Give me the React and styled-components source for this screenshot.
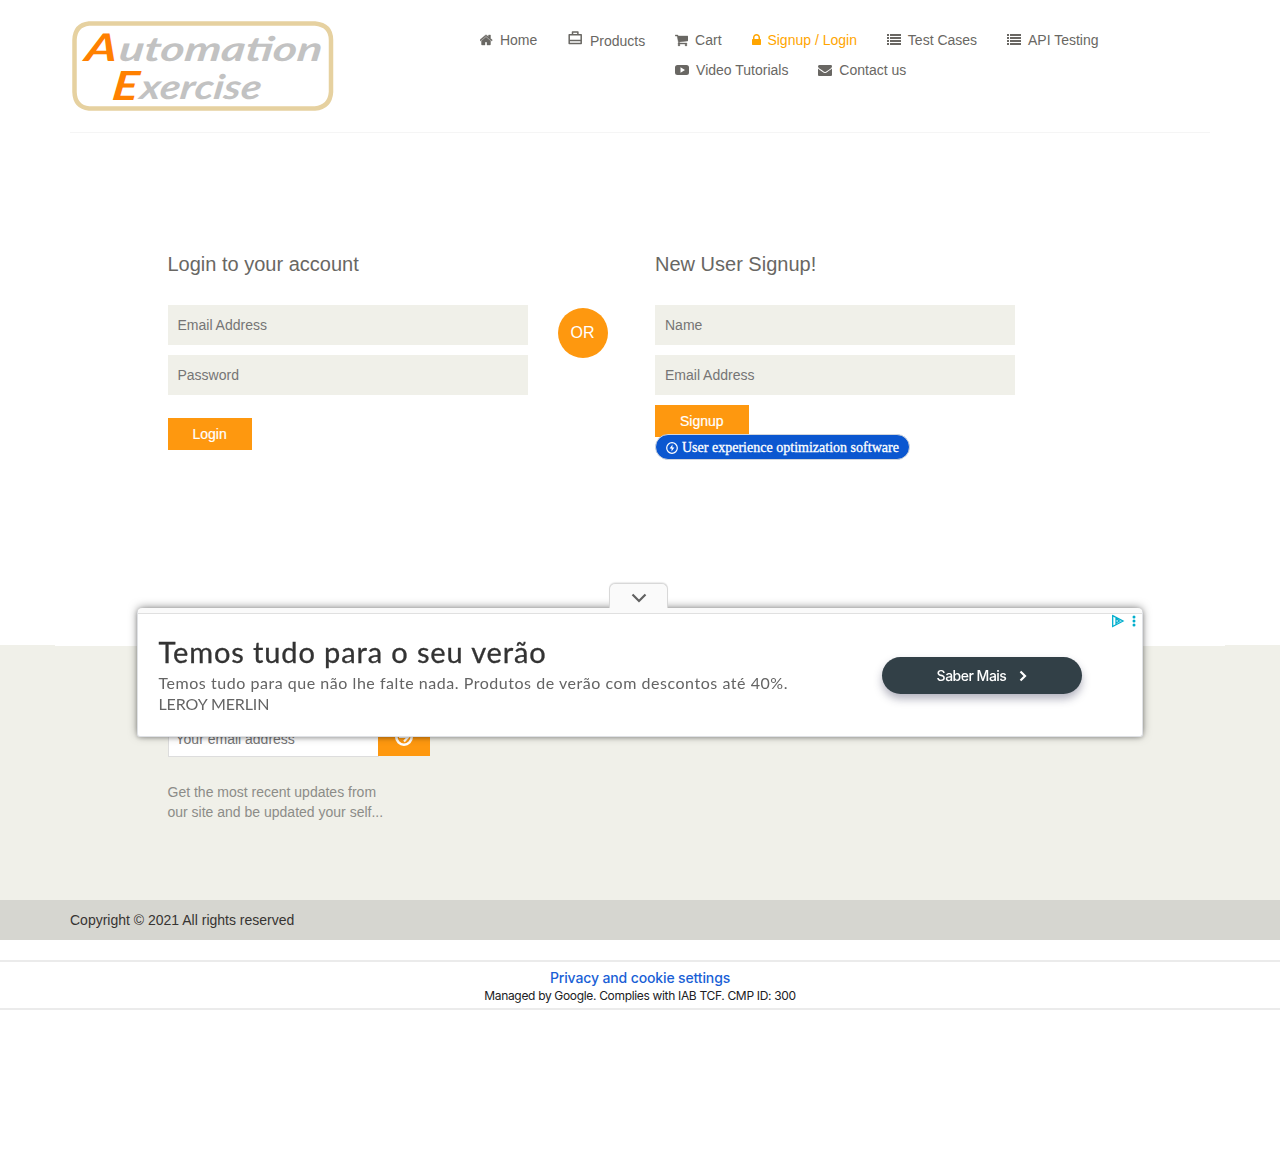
import React from "react";
import styled, { createGlobalStyle } from "styled-components";

const Global = createGlobalStyle`
  * { box-sizing: border-box; }
  body { margin: 0; background: #fff; color: #696763; font-family: "Liberation Sans", Arial, sans-serif; font-size: 14px; line-height: 20px; }
  p, h1, h2 { margin: 0; font-weight: 400; }
`;

const Page = styled.div`
  min-height: 1169px;
  overflow: hidden;
`;

const Header = styled.header`
  display: flex;
  width: 1140px;
  height: 133px;
  margin: 0 auto;
  border-bottom: 1px solid #f5f5f5;
`;

const Logo = styled.a`
  display: block;
  width: 410px;
  padding: 20px 0 0 1px;
`;

const LogoArt = styled.svg`
  display: block;
  overflow: visible;
  text { font-family: Lato, sans-serif; font-style: italic; font-weight: 700; }
`;

const Nav = styled.nav`
  display: flex;
  gap: 30px;
  padding-top: 30px;
`;

const WrapLinks = styled.div`
  display: flex;
  flex-wrap: wrap;
  align-content: flex-start;
  gap: 10px 30px;
  width: 440px;
`;

const NavLink = styled.a`
  display: flex;
  align-items: center;
  gap: 6.9px;
  height: 20px;
  white-space: nowrap;
  color: ${(p) => (p.$active ? "orange" : "#696763")};
  svg { flex: none; fill: currentColor; }
`;

const ProductsLink = styled(NavLink)`
  margin-top: 1px;
  gap: 6.5px;
  svg { margin: -6px 0 0 0.2px; }
`;

const Main = styled.main`
  display: flex;
  width: 1170px;
  height: 512px;
  margin: 0 auto;
  padding: 120px 0 0 112.5px;
`;

const FormColumn = styled.form`
  width: 360px;
`;

const FormTitle = styled.h2`
  height: 52px;
  font-size: 20px;
  line-height: 22px;
`;

const Field = styled.input`
  display: block;
  width: 100%;
  height: 40px;
  margin-bottom: 10px;
  padding: 0 10px;
  border: 0;
  border-radius: 0;
  outline: 0;
  background: #f0f0e9;
  font: 14px "Liberation Sans", Arial, sans-serif;
  &::placeholder { color: #757575; opacity: 1; }
`;

const SubmitButton = styled.button`
  display: block;
  height: 32px;
  margin-top: ${(p) => p.$top || 0}px;
  padding: 0 25px;
  border: 0;
  background: #fe980f;
  color: #fff;
  font: 14px "Liberation Sans", Arial, sans-serif;
  -webkit-text-stroke: 0.2px #fff;
`;

const OrCircle = styled.span`
  width: 50px;
  height: 50px;
  margin: 55px 47.5px 0 30px;
  border-radius: 50%;
  background: #fe980f;
  color: #fff;
  font-size: 16px;
  line-height: 50px;
  text-align: center;
`;

const OptimizerBadge = styled.a`
  position: relative;
  display: flex;
  align-items: center;
  gap: 3px;
  width: 255px;
  height: 26px;
  margin-top: -3px;
  padding: 1px 0 0 9px;
  border: 1px solid #d2d6dc;
  border-radius: 13px;
  background: #0b57d0;
  color: #fff;
  font-family: "Liberation Serif", "Times New Roman", serif;
  font-size: 14px;
  letter-spacing: 0.01px;
  -webkit-text-stroke: 0.3px #fff;
  white-space: nowrap;
`;

const Footer = styled.footer`
  height: 295px;
  background: #f0f0e9;
`;

const FooterInner = styled.div`
  width: 1170px;
  height: 255px;
  margin: 0 auto;
  padding: 76px 0 0 112.5px;
  border-top: 1px solid #fff;
`;

const Newsletter = styled.form`
  display: flex;
  align-items: flex-start;
`;

const NewsInput = styled.input`
  width: 211px;
  height: 35px;
  margin-right: -1px;
  padding: 0 7px 2px;
  border: 1px solid #ddd;
  border-radius: 0;
  background: #fff;
  font: 14px "Liberation Sans", Arial, sans-serif;
  &::placeholder { color: #757575; opacity: 1; }
`;

const NewsButton = styled.button`
  display: flex;
  justify-content: center;
  width: 52px;
  height: 34px;
  padding: 5px 0 0;
  border: 0;
  background: #fe980f;
`;

const NewsText = styled.p`
  margin-top: 25px;
  color: #8c8c88;
`;

const Copyright = styled.div`
  height: 40px;
  padding-left: 70px;
  background: #d6d6d0;
  color: #363432;
  line-height: 40px;
`;

const Consent = styled.section`
  height: 50px;
  margin-top: 20px;
  padding-top: 7px;
  border: solid #ebebeb;
  border-width: 2px 0;
  font-family: Inter, sans-serif;
  text-align: center;
`;

const ConsentLink = styled.a`
  display: block;
  color: #1a5fd6;
  font-size: 14px;
  font-weight: 500;
  line-height: 18px;
  letter-spacing: -0.13px;
`;

const ConsentNote = styled.p`
  color: #202124;
  font-size: 12px;
  line-height: 18px;
  letter-spacing: -0.33px;
`;

const AdDock = styled.aside`
  position: fixed;
  top: 583px;
  left: 137px;
  width: 1006px;
`;

const AdTab = styled.button`
  display: flex;
  justify-content: center;
  align-items: center;
  width: 59px;
  height: 25px;
  margin: 0 0 0 472px;
  padding: 4px 0 0;
  border: 1px solid #d8d8d8;
  border-bottom: 0;
  border-radius: 6px 6px 0 0;
  background: #fafafa;
  position: relative;
  z-index: 1;
  box-shadow: 0 -1px 1px rgba(0, 0, 0, 0.08);
`;

const AdCard = styled.div`
  height: 129px;
  border: 1px solid #dfe1e5;
  border-top: 5px solid #fafafa;
  border-radius: 5px 5px 3px 3px;
  background: #fff;
  box-shadow: 0 -1px 10px -1px rgba(0, 0, 0, 0.5), 0 1px 4px rgba(0, 0, 0, 0.2);
`;

const AdBody = styled.div`
  position: relative;
  display: flex;
  height: 123px;
  padding: 21px 60px 0 20.5px;
  border-top: 1px solid #e0e0e0;
  justify-content: space-between;
`;

const AdCopy = styled.div`
  font-family: Lato, sans-serif;
  white-space: nowrap;
`;

const AdTitle = styled.h1`
  color: #333;
  font-size: 29px;
  line-height: 34px;
  letter-spacing: 0.88px;
  -webkit-text-stroke: 0.3px #333;
`;

const AdText = styled.p`
  margin-top: ${(p) => (p.$brand ? 0 : 3)}px;
  color: #646464;
  font-size: 16px;
  line-height: 21px;
  letter-spacing: ${(p) => (p.$brand ? -0.1 : 0.54)}px;
`;

const AdAction = styled.a`
  display: flex;
  align-items: center;
  justify-content: center;
  gap: 13px;
  width: 200px;
  height: 37px;
  margin-top: 22px;
  border-radius: 19px;
  background: #324047;
  box-shadow: 0 5px 9px rgba(40, 40, 75, 0.35);
  color: #fff;
  font: 500 14px Inter, sans-serif;
  letter-spacing: -0.5px;
`;

const AdChoices = styled.svg`
  position: absolute;
  top: 0;
  right: 4px;
`;

const PATHS = {
  home: ["64 0 1664 1792", 13, "M1408 992v480q0 26-19 45t-45 19h-384v-384h-256v384h-384q-26 0-45-19t-19-45v-480q0-1 .5-3t.5-3l575-474 575 474q1 2 1 6zm223-69l-62 74q-8 9-21 11h-3q-13 0-21-7l-692-577-692 577q-12 8-24 7-13-2-21-11l-62-74q-8-10-7-23.5t11-21.5l719-599q32-26 76-26t76 26l244 204v-195q0-14 9-23t23-9h192q14 0 23 9t9 23v408l219 182q10 8 11 21.5t-7 23.5z"],
  cart: ["64 0 1664 1792", 13, "M704 1536q0 52-38 90t-90 38-90-38-38-90 38-90 90-38 90 38 38 90zm896 0q0 52-38 90t-90 38-90-38-38-90 38-90 90-38 90 38 38 90zm128-1088v512q0 24-16.5 42.5t-40.5 21.5l-1044 122q13 60 13 70 0 16-24 64h920q26 0 45 19t19 45-19 45-45 19h-1024q-26 0-45-19t-19-45q0-11 8-31.5t16-36 21.5-40 15.5-29.5l-177-823h-204q-26 0-45-19t-19-45 19-45 45-19h256q16 0 28.5 6.5t19.5 15.5 13 24.5 8 26 5.5 29.5 4.5 26h1201q26 0 45 19t19 45z"],
  lock: ["320 0 1152 1792", 9, "M640 768h512v-192q0-106-75-181t-181-75-181 75-75 181v192zm832 96v576q0 40-28 68t-68 28h-960q-40 0-68-28t-28-68v-576q0-40 28-68t68-28h32v-192q0-184 132-316t316-132 316 132 132 316v192h32q40 0 68 28t28 68z"],
  list: ["0 0 14 14", 14, "M0 1h2v2H0zM3 1h11v2H3zM0 4h2v2H0zM3 4h11v2H3zM0 7h2v2H0zM3 7h11v2H3zM0 10h2v2H0zM3 10h11v2H3z"],
  video: ["0 0 14 14", 14, "M2.5 2h9Q14 2 14 4.5v5Q14 12 11.500 12h-9Q0 12 0 9.500v-5Q0 2 2.500 2zM5.500 4.200v5.600L10 7z"],
  mail: ["0 0 1792 1792", 14, "M1792 710v794q0 66-47 113t-113 47h-1472q-66 0-113-47t-47-113v-794q44 49 101 87 362 246 497 345 57 42 92.500 65.500t94.500 48 110 24.500h2q51 0 110-24.500t94.500-48 92.500-65.500q170-123 498-345 57-39 100-87zm0-294q0 79-49 151t-122 123q-376 261-468 325-10 7-42.500 31t-54 38-52 32.500-57.500 27-50 9h-2q-23 0-50-9t-57.500-27-52-32.500-54-38-42.500-31q-91-64-262-182.500t-205-142.500q-62-42-117-115.500t-55-136.500q0-78 41.500-130t118.500-52h1472q65 0 112.500 47t47.500 113z"],
};

function Icon({ name }) {
  const [viewBox, width, d] = PATHS[name];
  return (
    <svg width={width} height="14" viewBox={viewBox}>
      <path d={d} fillRule="evenodd" stroke="currentColor" strokeWidth={name === "home" || name === "cart" ? 50 : 0} />
    </svg>
  );
}

function BrandLogo() {
  return (
    <LogoArt width="264" height="92" viewBox="0 0 264 92">
      <path d="M18 3.500H244Q260 5 260 20V72Q259 87 244 88.500H18Q4 87 3.500 72V20Q4 5 18 3.500Z" fill="none" stroke="#e6d1a0" strokeWidth="4.500" />
      <g transform="translate(13 41) skewX(-8)">
        <text fontSize="38" fill="#ff8000" textLength="32" lengthAdjust="spacingAndGlyphs">A</text>
        <text x="34" fontSize="34" fill="#c2c2c2" textLength="203" lengthAdjust="spacingAndGlyphs">utomation</text>
      </g>
      <g transform="translate(40 80) skewX(-8)">
        <text fontSize="40" fill="#ff8000" textLength="26" lengthAdjust="spacingAndGlyphs">E</text>
        <text x="28" y="-1" fontSize="34" fill="#c2c2c2" textLength="121" lengthAdjust="spacingAndGlyphs">xercise</text>
      </g>
    </LogoArt>
  );
}

const MENU = [
  { icon: "cart", label: "Cart" },
  { icon: "lock", label: "Signup / Login", active: true },
  { icon: "list", label: "Test Cases" },
  { icon: "list", label: "API Testing" },
  { icon: "video", label: "Video Tutorials" },
  { icon: "mail", label: "Contact us" },
];

export default function App() {
  return (
    <Page>
      <Global />
      <Header>
        <Logo><BrandLogo /></Logo>
        <Nav>
          <NavLink><Icon name="home" />Home</NavLink>
          <ProductsLink>
            <svg width="16" height="16" viewBox="0 0 16 16">
              <path d="M2.200 4.700H14.200V13.600H2.200ZM5.500 4.700V2H10.900V4.700M2.200 10.500H14.200" fill="none" stroke="currentColor" strokeWidth="1.500" strokeLinejoin="round" />
            </svg>
            Products
          </ProductsLink>
          <WrapLinks>
            {MENU.map((m) => (
              <NavLink key={m.label} $active={m.active}><Icon name={m.icon} />{m.label}</NavLink>
            ))}
          </WrapLinks>
        </Nav>
      </Header>

      <Main>
        <FormColumn>
          <FormTitle>Login to your account</FormTitle>
          <Field placeholder="Email Address" />
          <Field placeholder="Password" />
          <SubmitButton type="button" $top={23}>Login</SubmitButton>
        </FormColumn>
        <OrCircle>OR</OrCircle>
        <FormColumn>
          <FormTitle>New User Signup!</FormTitle>
          <Field placeholder="Name" />
          <Field placeholder="Email Address" />
          <SubmitButton type="button">Signup</SubmitButton>
          <OptimizerBadge>
            <svg width="14" height="14" viewBox="0 0 14 14" fill="none" stroke="#fff" strokeWidth="1.200">
              <circle cx="7" cy="7" r="5.300" />
              <path d="M7.500 3.500 4.600 7.500h2L6.500 10.500 9.400 6.500h-2Z" fill="#fff" stroke="none" />
            </svg>
            User experience optimization software
          </OptimizerBadge>
        </FormColumn>
      </Main>

      <Footer>
        <FooterInner>
          <Newsletter>
            <NewsInput placeholder="Your email address" />
            <NewsButton type="button">
              <svg width="20" height="20" viewBox="0 0 20 20" fill="none" stroke="#fff" strokeWidth="2.600">
                <circle cx="10" cy="10" r="7.700" />
                <path d="M5 10h9M10 5.500 14.200 10 10 14.500" strokeWidth="2.200" />
              </svg>
            </NewsButton>
          </Newsletter>
          <NewsText>Get the most recent updates from<br />our site and be updated your self...</NewsText>
        </FooterInner>
        <Copyright>Copyright © 2021 All rights reserved</Copyright>
      </Footer>

      <Consent>
        <ConsentLink>Privacy and cookie settings</ConsentLink>
        <ConsentNote>Managed by Google. Complies with IAB TCF. CMP ID: 300</ConsentNote>
      </Consent>

      <AdDock>
        <AdTab type="button">
          <svg width="16" height="10" viewBox="0 0 16 10" fill="none" stroke="#616161" strokeWidth="2.200">
            <path d="M1.500 1.500 8 8l6.500-6.500" />
          </svg>
        </AdTab>
        <AdCard>
          <AdBody>
            <AdCopy>
              <AdTitle>Temos tudo para o seu verão</AdTitle>
              <AdText>Temos tudo para que não lhe falte nada. Produtos de verão com descontos até 40%.</AdText>
              <AdText $brand>LEROY MERLIN</AdText>
            </AdCopy>
            <AdAction>
              Saber Mais
              <svg width="8" height="12" viewBox="0 0 8 12" fill="none" stroke="#fff" strokeWidth="2.200">
                <path d="m1.500 1.500 4.500 4.500-4.500 4.500" />
              </svg>
            </AdAction>
            <AdChoices width="28" height="14" viewBox="0 0 28 14">
              <path d="M2.700 1.700 13 7 2.700 12.500ZM6 11V4.800L9.500 7 6 9" fill="none" stroke="#00aecd" strokeWidth="1.300" />
              <g fill="#00aecd"><circle cx="24" cy="3" r="1.500" /><circle cx="24" cy="7" r="1.500" /><circle cx="24" cy="11" r="1.500" /></g>
            </AdChoices>
          </AdBody>
        </AdCard>
      </AdDock>
    </Page>
  );
}
